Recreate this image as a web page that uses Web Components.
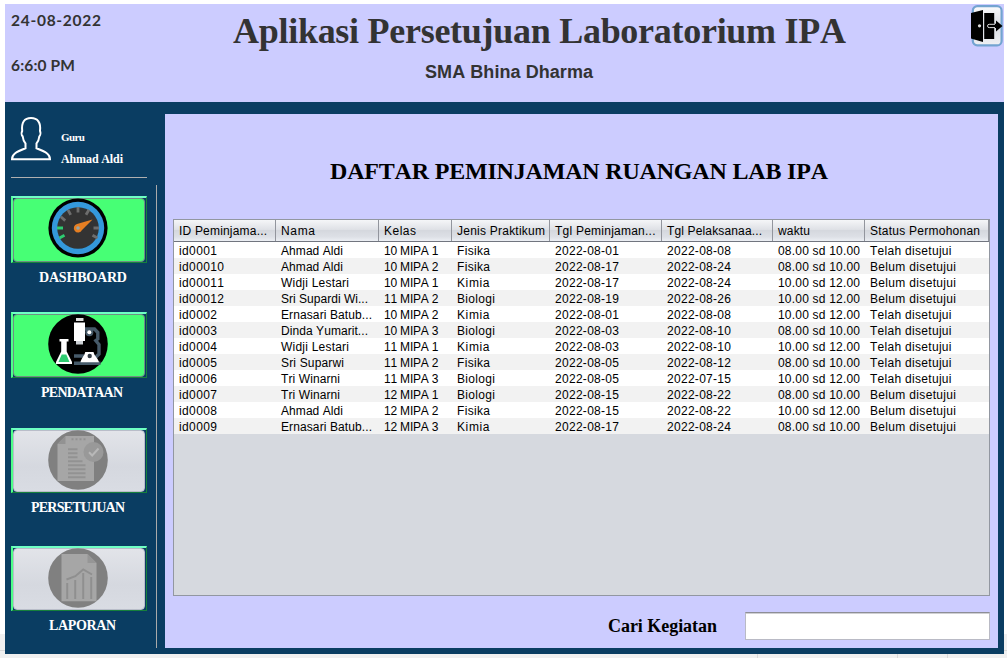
<!DOCTYPE html>
<html lang="id">
<head>
<meta charset="utf-8">
<title>Aplikasi Persetujuan Laboratorium IPA</title>
<style>
html,body{margin:0;height:100%}
body{box-sizing:border-box;height:658px;padding:4px 3px 4px 5px;overflow:hidden;font-family:"Liberation Serif",serif;
background:linear-gradient(#d9d9d9,#d9d9d9) 757px 654px/1px 4px no-repeat,linear-gradient(#d9d9d9,#d9d9d9) 897px 654px/1px 4px no-repeat,linear-gradient(#d9d9d9,#d9d9d9) 947px 654px/1px 4px no-repeat,linear-gradient(#fff 0 634px,#f0f0f0 634px 650px,#d9d9d9 650px 651px,#f0f0f0 651px)}
</style>
</head>
<body>
<lab-app></lab-app>
<script>
// Text label tracked to occupy a given width: <text-label w="88">…</text-label>
class TextLabel extends HTMLElement{
  connectedCallback(){
    if(!this.shadowRoot) this.attachShadow({mode:'open'}).innerHTML='<style>:host{display:block;white-space:pre}span{display:inline-block;font-kerning:none}</style><span><slot></slot></span>';
    const w=+this.getAttribute('w'), n=this.textContent.length, s=this.shadowRoot.querySelector('span');
    if(w&&n>1){ s.style.letterSpacing='0'; const natural=s.getBoundingClientRect().width; s.style.letterSpacing=((w-natural)/(n-1)).toFixed(3)+'px'; }
  }
}
customElements.define('text-label',TextLabel);

class ExitButton extends HTMLElement{
  constructor(){super();this.attachShadow({mode:'open'}).innerHTML=`
<style>:host{display:block;width:34px;height:44px}svg{display:block}</style>
<svg width="34" height="44" viewBox="0 0 34 44">
<defs><linearGradient id="g" x2="0" y2="1"><stop offset="0" stop-color="#fbfbfc"/><stop offset=".5" stop-color="#d9dce2"/><stop offset="1" stop-color="#eff1f4"/></linearGradient></defs>
<rect x="2.8" y="2.2" width="28.8" height="39.2" rx="4.5" fill="url(#g)" stroke="#73a4d1" stroke-width="2.2"/>
<rect x="14.2" y="9" width="10" height="26"/>
<path d="M1 9L13 6V38L1 34.5Z"/>
<circle cx="9.5" cy="21.8" r="1.6" fill="#ddd"/>
<path d="M19 19.8H26V16.5L32.5 22L26 27.4V24H19A2 2 0 0 1 19 19.8Z" fill="#000"/>
<path d="M25 20.3H19.2A1.6 1.6 0 0 0 19.2 23.6H25" fill="none" stroke="#ddd" stroke-width="1"/>
</svg>`}
}
customElements.define('exit-button',ExitButton);

class AppHeader extends HTMLElement{
  constructor(){super();this.attachShadow({mode:'open'}).innerHTML=`
<style>
:host{display:flex;height:98px;background:#ccf;color:#333}
.clock{width:222px;padding:5px 0 0 6px;font:700 15.5px/22px Lato,"Open Sans",sans-serif}
.clock text-label+text-label{margin-top:23px}
.mid{flex:1;padding-top:7px}
h1{margin:0;font:700 36px/40px "Liberation Serif",serif}
h2{margin:11px 0 0 192px;font:700 18px/20px "Liberation Sans",sans-serif}
</style>
<div class="clock"><text-label w="90">24-08-2022</text-label><text-label w="64">6:6:0 PM</text-label></div>
<div class="mid"><h1><text-label w="613">Aplikasi Persetujuan Laboratorium IPA</text-label></h1><h2><text-label w="168">SMA Bhina Dharma</text-label></h2></div>
<exit-button></exit-button>`}
}
customElements.define('app-header',AppHeader);

const ICONS={
gauge:`<circle cx="30" cy="30" r="29.6"/><circle cx="30" cy="30" r="26.2" fill="#3498db"/><circle cx="30" cy="30" r="20.8" fill="#333"/>
<g fill="none" stroke-width="2.8"><path stroke="#2ecc71" d="M9 30H15M11.5 40L16.5 37.2"/><path stroke="#6d6d6d" d="M12.8 18.8L17.2 22.6M20 11.8L22.7 16.8M30 9V14.5M41 11.8L38 16.8M51 30H45.5M49.5 40L44.5 37.2"/></g>
<path d="M44.5 21.5L29 26A4.3 4.3 0 1 0 34 32Z" fill="#e67e22"/><circle cx="30" cy="30" r="1.8" fill="#95a5a6"/>`,
lab:`<circle cx="30" cy="30" r="29.8"/>
<g fill="none" stroke="#465a69" stroke-width="3.4"><path d="M36 15H46.5L49.8 18.5V25L46.5 27.5M46.8 25.5L51 30.5V40L47 44"/><path d="M26 42H36M26 49.2H52.5"/></g>
<circle cx="41.3" cy="18.3" r="4" fill="#465a69"/><circle cx="41.3" cy="18.3" r="2" fill="#fff"/>
<path d="M28 4H35.5V7H28Z" fill="#ddd"/><path d="M26 8.5H37V27H26Z" fill="#fff"/><path d="M28 27H35V30.5H28Z" fill="#ccd1d5"/>
<path d="M32.5 48.3C33.5 44 36 42.5 37.3 38H45.5C46.5 42.5 50 44 51 48.3Z" fill="#fff"/><circle cx="41.7" cy="42" r="2.2" fill="#333c44"/>
<path d="M11.5 25H20.5V27.5H18.7V37.5L24 48V50H8V48L13.2 37.5V27.5H11.5Z" fill="#fff"/><path d="M13.7 40.5H18.3L21.5 48H10.5Z" fill="#2ecc71"/>`,
approve:`<circle cx="30" cy="30" r="29.8" fill="#808080"/><path d="M17.5 6H46V51H9.5V14Z" fill="#a6a6a6"/><path d="M17.5 6V14H9.5Z" fill="#929292"/>
<g stroke="#929292" stroke-width="2" fill="none"><path stroke-dasharray="2 2" d="M23.5 9.3H38"/><path d="M20 19.3H29.5M20 23.3H29.5M20 27.3H29.5M20 31.3H34.5M20 35.3H37.5M20 39.3H37.5M20 43.3H37.5M20 47.3H37.5"/></g>
<circle cx="45.5" cy="22" r="10" fill="#999"/><path d="M41 22.3L44.2 25.5L50.5 18.5" fill="none" stroke="#b8b8b8" stroke-width="2"/>`,
report:`<circle cx="30" cy="30" r="29.8" fill="#808080"/><path d="M13.5 6H39.5L48.5 15V53.3H13.5Z" fill="#a6a6a6"/><path d="M39.5 6V15H48.5Z" fill="#969696"/>
<g stroke="#8f8f8f" stroke-width="2" fill="none"><path d="M19.2 35V51M27.2 32V51M35.2 25V51M43.2 29V51"/><path d="M18.5 31.5L27.3 28.2L35.2 21.5L44 26.5"/></g>`
};
class NavItem extends HTMLElement{
  constructor(){super();this.attachShadow({mode:'open'})}
  connectedCallback(){
    const g=k=>this.getAttribute(k);
    this.shadowRoot.innerHTML=`
<style>
:host{display:block}
.frame{box-sizing:border-box;width:136px;height:${g('h')}px;border-style:solid;border-width:2px 1px 1px 2px;border-color:#6fffc4 #16803c #16803c #4dff88;}
button{box-sizing:border-box;display:flex;justify-content:center;align-items:flex-start;width:132px;height:100%;margin:0;padding:0;border-radius:4px;border:1px solid ${g('off')!==null?'#b9bdc9':'#6f8f84'};background:${g('off')!==null?'linear-gradient(#e2e4e9,#d5d8df 60%,#d9dce3)':'#47ff75'}}
svg{display:block;flex:none;margin:-1px 2px 0 0}
text-label{color:#fff;font:700 14px/18px "Liberation Serif",serif;margin:${g('gap')}px 0 0 ${g('x')}px}
</style>
<div class="frame"><button><svg width="60" height="60" viewBox="0 0 60 60">${ICONS[g('icon')]}</svg></button></div>
<text-label w="${g('w')}">${g('label')}</text-label>`}
}
customElements.define('nav-item',NavItem);

class SideBar extends HTMLElement{
  constructor(){super();this.attachShadow({mode:'open'}).innerHTML=`
<style>
:host{display:flex;box-sizing:border-box;width:160px;height:552px;padding-left:6px;color:#fff}
.col{width:136px}
.user{display:flex;height:75px;border-bottom:1px solid #b0b0b0}
.user svg{margin-top:14px;flex:none}
.names{padding:28px 0 0 10px;font:700 11px/14px "Liberation Serif",serif}
.names text-label+text-label{margin-top:8px;font-size:12px}
nav{display:grid;grid-template-rows:116px 116px 118px 100px;padding-top:18px}
.rule{width:1px;height:463px;margin:83px 0 0 9px;background:#aaa}
</style>
<div class="col">
<div class="user"><svg width="40" height="46" viewBox="0 0 40 46" fill="none" stroke="#fff" stroke-width="2"><path d="M1 43.2C1 38 5 36 14.5 32.3V27.5C12.5 25.5 12 23 11.7 20.5C10.4 19 10.3 16.3 11.2 15C10.3 6.5 13.3 2 20 2S30 6.5 29 15C29.8 16.3 29.5 19 28.3 20.5C28 23 27.5 25.5 25.5 27.5V32.3C35 36 39 38 39 43.2Z"/></svg>
<div class="names"><text-label w="24">Guru</text-label><text-label w="62">Ahmad Aldi</text-label></div></div>
<nav>
<nav-item icon="gauge" h="67" label="DASHBOARD" x="28" w="88" gap="6"></nav-item>
<nav-item icon="lab" h="66" label="PENDATAAN" x="30" w="82" gap="6"></nav-item>
<nav-item off icon="approve" h="65" label="PERSETUJUAN" x="20" w="94" gap="6"></nav-item>
<nav-item off icon="report" h="65" label="LAPORAN" x="38" w="67" gap="6"></nav-item>
</nav></div><div class="rule"></div>`}
}
customElements.define('side-bar',SideBar);

const W={'ID Peminjama...':88,'Nama':34,'Kelas':32,'Jenis Praktikum':88,'Tgl Peminjaman...':100.5,'Tgl Pelaksanaa...':95,'waktu':32,'Status Permohonan':110,
'Ahmad Aldi':62,'Widji Lestari':68,'Sri Supardi Wi...':87,'Ernasari Batub...':91,'Dinda Yumarit...':87,'Sri Suparwi':63,'Tri Winarni':59,
'Fisika':33,'Kimia':32.5,'Biologi':38,'Telah disetujui':81.5,'Belum disetujui':86};
const width=t=>W[t]||(/^id/.test(t)?t.length*7-4:/MIPA/.test(t)?54.5:/^2022/.test(t)?64:82);
class LoanTable extends HTMLElement{
  constructor(){super();
    const head=['ID Peminjama...','Nama','Kelas','Jenis Praktikum','Tgl Peminjaman...','Tgl Pelaksanaa...','waktu','Status Permohonan'];
    const T='Telah disetujui',B='Belum disetujui',a='08.00 sd 10.00',b='10.00 sd 12.00';
    const rows=[
['id0001','Ahmad Aldi','10 MIPA 1','Fisika','08-01','08-08',a,T],
['id00010','Ahmad Aldi','10 MIPA 2','Fisika','08-17','08-24',a,B],
['id00011','Widji Lestari','10 MIPA 1','Kimia','08-17','08-24',b,B],
['id00012','Sri Supardi Wi...','11 MIPA 2','Biologi','08-19','08-26',b,B],
['id0002','Ernasari Batub...','10 MIPA 2','Kimia','08-01','08-08',b,T],
['id0003','Dinda Yumarit...','10 MIPA 3','Biologi','08-03','08-10',a,T],
['id0004','Widji Lestari','11 MIPA 1','Kimia','08-03','08-10',b,T],
['id0005','Sri Suparwi','11 MIPA 2','Fisika','08-05','08-12',a,T],
['id0006','Tri Winarni','11 MIPA 3','Biologi','08-05','07-15',b,T],
['id0007','Tri Winarni','12 MIPA 1','Biologi','08-15','08-22',a,B],
['id0008','Ahmad Aldi','12 MIPA 2','Fisika','08-15','08-22',b,B],
['id0009','Ernasari Batub...','12 MIPA 3','Kimia','08-17','08-24',a,B]];
    const cell=t=>`<div><text-label w="${width(t)}">${t}</text-label></div>`;
    this.attachShadow({mode:'open'}).innerHTML=`
<style>
:host{display:block;box-sizing:border-box;height:377px;border:1px solid #9297a1;background:#d6d9df;color:#000;font:12px/16px "Liberation Sans",sans-serif}
.row,.head{display:grid;grid-template-columns:102px 103px 73px 98px 112px 111px 92px 124px}
.row div,.head div{padding-left:5px;min-width:0}
.row{height:16px;background:#fff;line-height:18px}
.row:nth-child(odd of .row){background:#fff}
.row:nth-child(even of .row){background:#f2f2f2}
.head{height:21px;line-height:22px;border-bottom:1px solid #71757f;background:linear-gradient(#f5f6f8,#dfe1e6 45%,#d5d8de 50%,#dde0e6 80%,#eceff4)}
.head div{height:21px;box-sizing:border-box;border-right:1px solid #92959d}
</style>
<div class="head">${head.map(cell).join('')}</div>
${rows.map(r=>`<div class="row">${r.map((t,i)=>cell(i==4||i==5?'2022-'+t:t)).join('')}</div>`).join('')}`}
}
customElements.define('loan-table',LoanTable);

class SearchBar extends HTMLElement{
  constructor(){super();this.attachShadow({mode:'open'}).innerHTML=`
<style>
:host{display:flex;justify-content:space-between;margin:16px 0 0 435px;height:28px;color:#000;font:700 18px/28px "Liberation Serif",serif}
input{box-sizing:border-box;width:245px;height:28px;margin:0;padding:0 6px;border:1px solid #b9bac5;border-top-color:#8d8e96;background:#fff;box-shadow:inset 0 1px #cfcfd3;border-radius:0;outline:0}
</style><text-label w="109">Cari Kegiatan</text-label><input aria-label="Cari Kegiatan">`}
}
customElements.define('search-bar',SearchBar);

class MainPanel extends HTMLElement{
  constructor(){super();this.attachShadow({mode:'open'}).innerHTML=`
<style>
:host{display:block;box-sizing:border-box;width:833px;height:534px;margin-top:12px;padding:43px 8px 0;background:#ccf;color:#000}
h3{margin:0 0 34px 157px;font:700 24px/28px "Liberation Serif",serif}
</style><h3><text-label w="498">DAFTAR PEMINJAMAN RUANGAN LAB IPA</text-label></h3><loan-table></loan-table><search-bar></search-bar>`}
}
customElements.define('main-panel',MainPanel);

class LabApp extends HTMLElement{
  constructor(){super();this.attachShadow({mode:'open'}).innerHTML=`
<style>:host{display:block;width:999px;height:650px;background:#0a3d62}.body{display:flex}</style>
<app-header></app-header><div class="body"><side-bar></side-bar><main-panel></main-panel></div>`}
}
customElements.define('lab-app',LabApp);
</script>
</body>
</html>
